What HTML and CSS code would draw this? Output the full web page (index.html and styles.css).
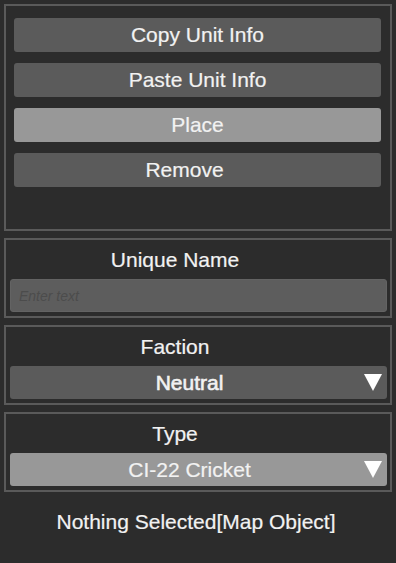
FILE: index.html
```html
<!DOCTYPE html>
<html lang="en">
<head>
  <meta charset="UTF-8">
  <meta name="viewport" content="width=device-width, initial-scale=1.0">
  <title>Map Object Editor</title>
  <link rel="stylesheet" href="styles.css">
</head>
<body>
  <div class="panel actions">
    <button class="btn">Copy Unit Info</button>
    <button class="btn">Paste Unit Info</button>
    <button class="btn active">Place</button>
    <button class="btn btn-remove">Remove</button>
  </div>

  <div class="panel field">
    <div class="label">Unique Name</div>
    <input class="text-input" type="text" placeholder="Enter text">
  </div>

  <div class="panel field">
    <div class="label">Faction</div>
    <div class="dropdown">
      <span class="dropdown-value heavy">Neutral</span>
      <svg class="arrow" width="18" height="17" viewBox="0 0 18 17"><polygon points="0,0 18,0 9,17" fill="#fff"/></svg>
    </div>
  </div>

  <div class="panel field">
    <div class="label">Type</div>
    <div class="dropdown light">
      <span class="dropdown-value">CI-22 Cricket</span>
      <svg class="arrow" width="18" height="17" viewBox="0 0 18 17"><polygon points="0,0 18,0 9,17" fill="#fff"/></svg>
    </div>
  </div>

  <div class="status">Nothing Selected[Map Object]</div>
</body>
</html>
```

FILE: styles.css
```css
body {
  margin: 0;
  padding: 4px 4px 0 4px;
  background-color: #2c2c2c;
  font-family: "Liberation Sans", Arial, sans-serif;
  color: #f2f2f2;
  -webkit-text-stroke: 0.2px #f2f2f2;
  display: flex;
  flex-direction: column;
  gap: 7px;
}

.panel {
  border: 2px solid #5a5a5a;
  box-sizing: border-box;
  width: 388px;
}

.actions {
  height: 227px;
  padding: 12px 9px 0 8px;
  display: flex;
  flex-direction: column;
  gap: 11px;
}

.btn {
  height: 34px;
  border: none;
  border-radius: 3px;
  background-color: #5b5b5b;
  color: #f2f2f2;
  -webkit-text-stroke: inherit;
  font-family: inherit;
  font-size: 21px;
  padding: 0;
  cursor: pointer;
}

.btn.active {
  background-color: #989898;
}

.btn-remove {
  padding-right: 26px;
}

.field {
  height: 80px;
  padding: 0 3px 0 4px;
}

.label {
  height: 39px;
  line-height: 39px;
  font-size: 21px;
  text-align: center;
  padding-right: 47px;
}

.text-input {
  display: block;
  box-sizing: border-box;
  width: 100%;
  height: 33px;
  border: 1px solid #636363;
  border-radius: 3px;
  background-color: #5d5d5d;
  padding: 0 8px;
  font-family: inherit;
  font-size: 14px;
  color: #f2f2f2;
  -webkit-text-stroke: 0;
}

.text-input::placeholder {
  color: #4c4c4c;
  font-style: italic;
}

.dropdown {
  height: 33px;
  border-radius: 3px;
  background-color: #5b5b5b;
  display: flex;
  align-items: center;
  padding-right: 5px;
}

.dropdown.light {
  background-color: #989898;
}

.dropdown-value {
  flex: 1;
  text-align: center;
  font-size: 21px;
  padding-left: 5px;
}

.dropdown-value.heavy {
  -webkit-text-stroke: 0.6px #f2f2f2;
}

.arrow {
  display: block;
  flex-shrink: 0;
}

.status {
  margin-top: 11px;
  line-height: 24px;
  font-size: 21px;
  text-align: center;
  padding-right: 4px;
}
```
